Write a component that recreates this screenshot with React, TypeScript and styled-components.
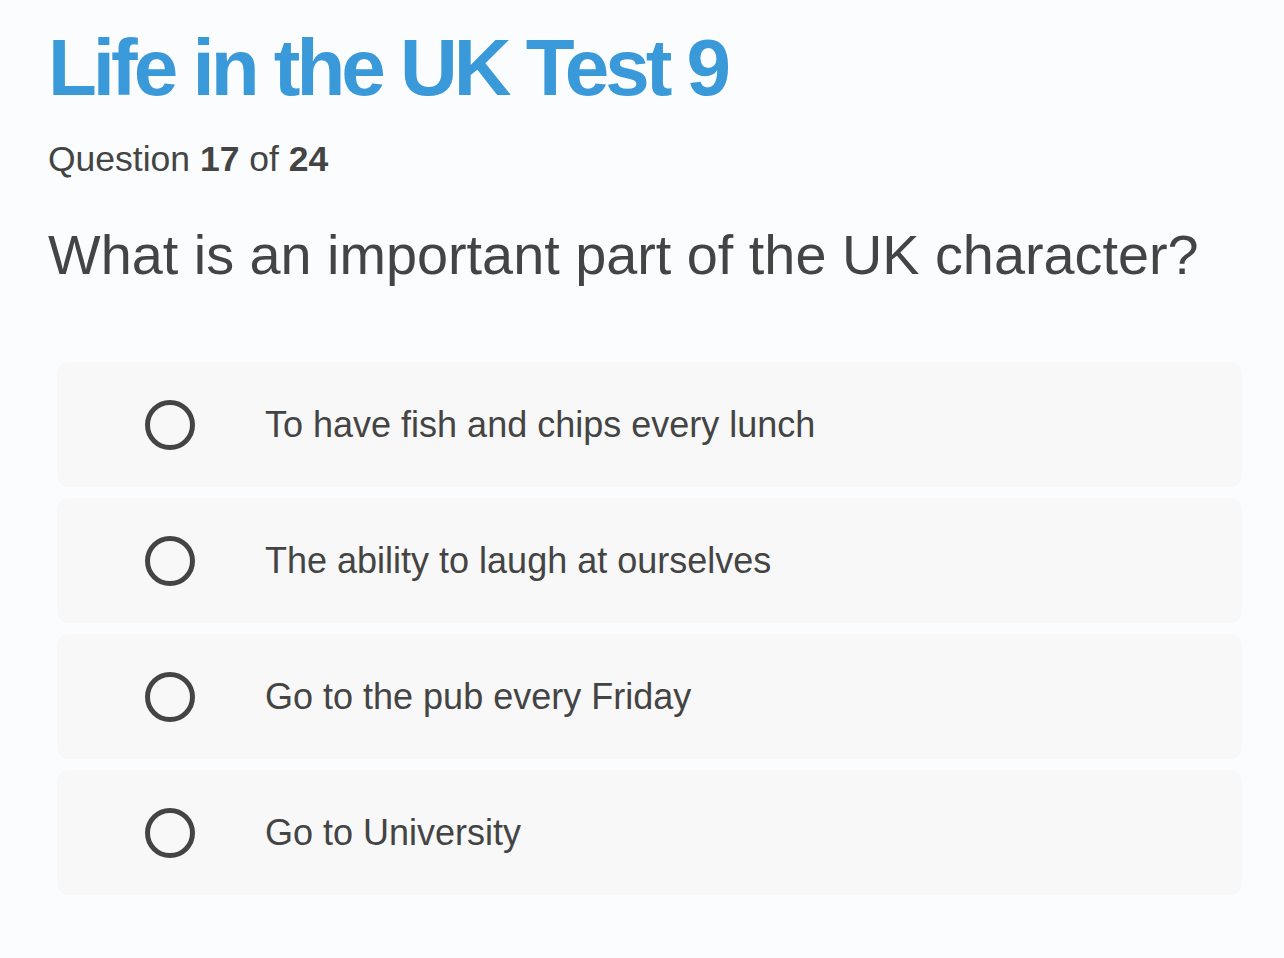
import React, { useState } from 'react';
import styled, { createGlobalStyle } from 'styled-components';

const GlobalStyle = createGlobalStyle`
  html, body {
    margin: 0;
    padding: 0;
    background: #fafcfe;
  }
  body {
    font-family: "Liberation Sans", Arial, sans-serif;
    color: #444;
  }
`;

const options: string[] = [
  'To have fish and chips every lunch',
  'The ability to laugh at ourselves',
  'Go to the pub every Friday',
  'Go to University',
];

const App: React.FC = () => {
  const [selected, setSelected] = useState<number | null>(null);

  return (
    <Page>
      <GlobalStyle />
      <Title>Life in the UK Test 9</Title>
      <Progress>
        Question <b>17</b> of <b>24</b>
      </Progress>
      <QuestionText>What is an important part of the UK character?</QuestionText>
      <OptionList>
        {options.map((opt, index) => (
          <Option key={index} onClick={() => setSelected(index)}>
            <Radio checked={selected === index} />
            <OptionLabel>{opt}</OptionLabel>
          </Option>
        ))}
      </OptionList>
    </Page>
  );
};

const Page = styled.div`
  padding: 22px 42px 60px 48px;
`;

const Title = styled.h1`
  margin: 0;
  font-size: 80px;
  font-weight: 700;
  letter-spacing: -4px;
  line-height: 92px;
  color: #3a9ad9;
`;

const Progress = styled.div`
  margin-top: 25px;
  font-size: 35.5px;
  line-height: 40px;
  color: #444;
  b {
    font-weight: 700;
  }
`;

const QuestionText = styled.h2`
  margin: 43px 0 0;
  font-size: 55.8px;
  font-weight: 400;
  line-height: 66px;
  color: #444;
`;

const OptionList = styled.div`
  display: flex;
  flex-direction: column;
  gap: 11px;
  margin: 74px 0 0 9px;
`;

const Option = styled.div`
  display: flex;
  align-items: center;
  height: 125px;
  padding-left: 88px;
  background: #f8f8f8;
  border-radius: 12px;
  cursor: pointer;
`;

const Radio = styled.span<{ checked: boolean }>`
  box-sizing: border-box;
  width: 50px;
  height: 50px;
  border: 5px solid #444;
  border-radius: 50%;
  background: ${(props) => (props.checked ? 'radial-gradient(#444 0 10px, transparent 11px)' : 'transparent')};
  flex-shrink: 0;
`;

const OptionLabel = styled.span`
  margin-left: 70px;
  font-size: 36px;
  color: #444;
`;

export default App;
